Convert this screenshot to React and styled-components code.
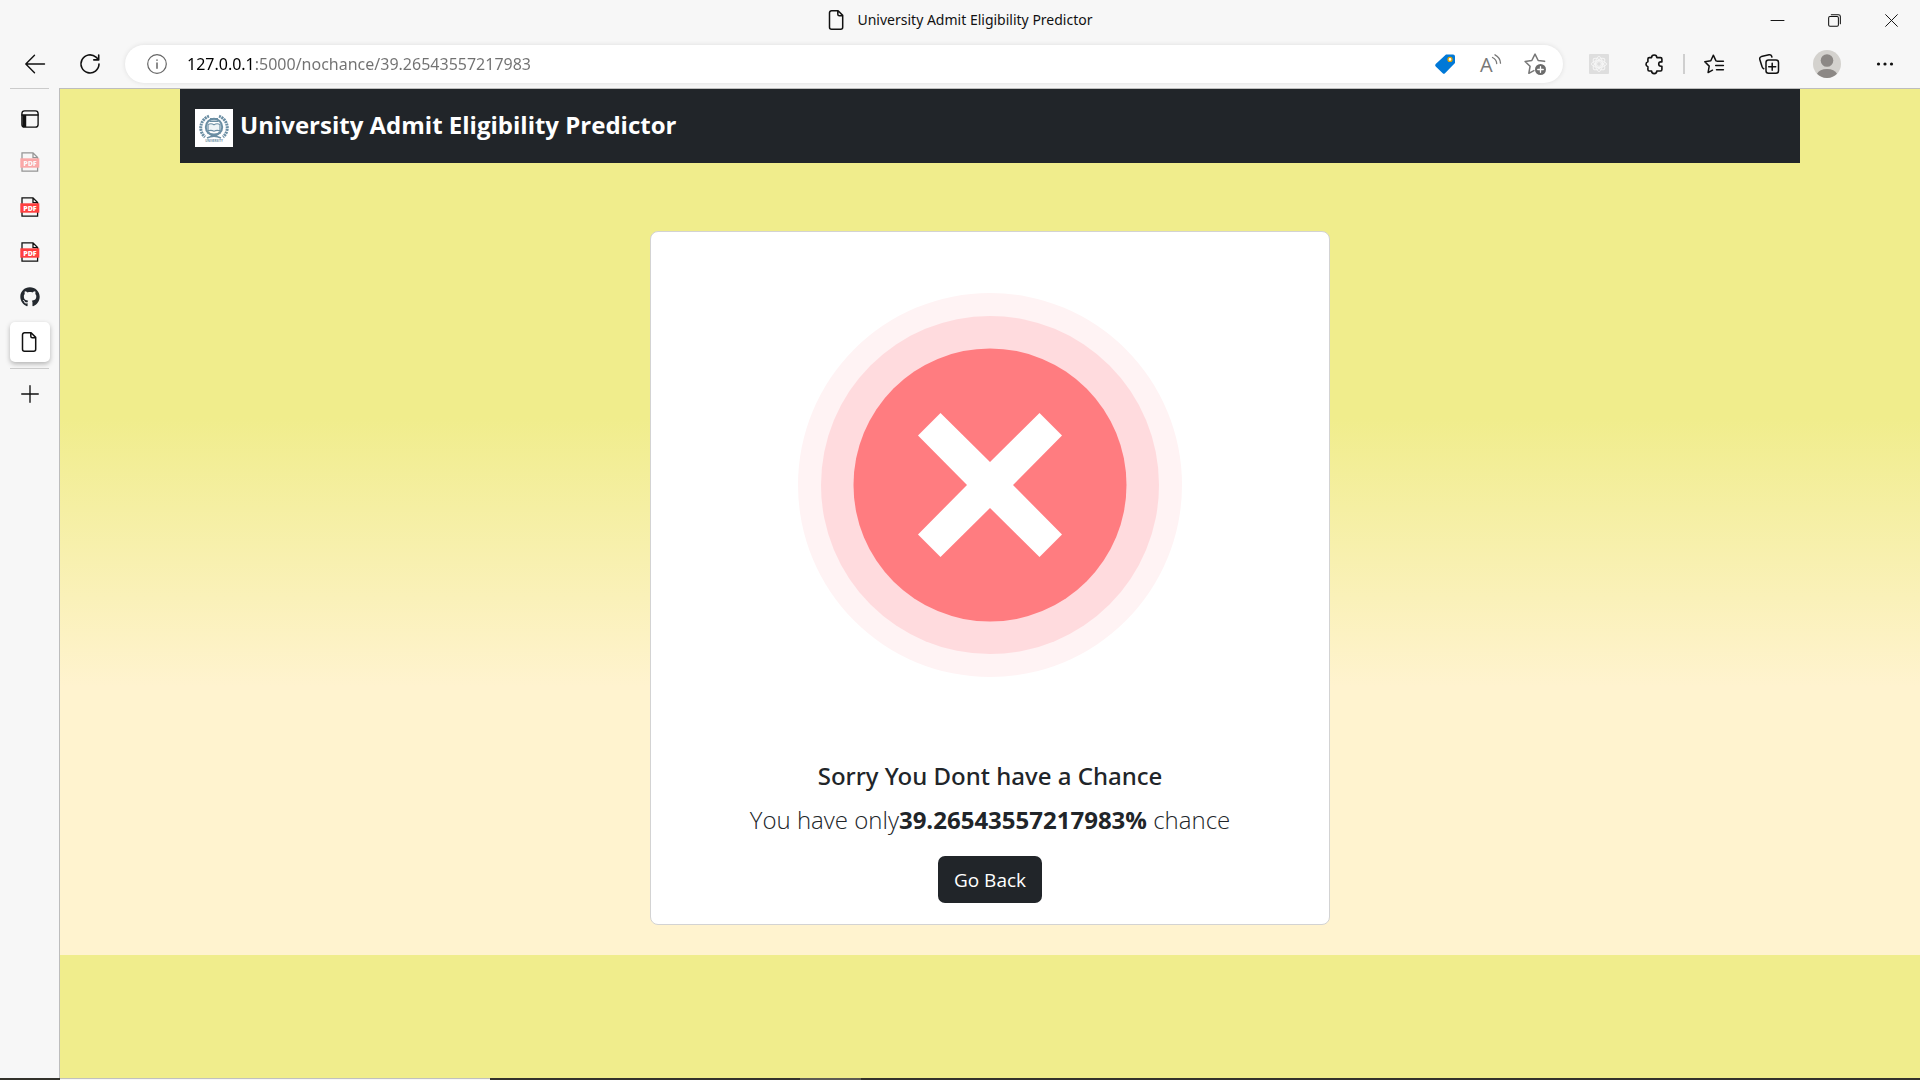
import React from "react";
import styled, { createGlobalStyle } from "styled-components";
import { FaGithub } from "react-icons/fa";

const GlobalStyle = createGlobalStyle`
  *, *::before, *::after { box-sizing: border-box; }
  body {
    margin: 0;
    background: #f7f7f7;
    color: #212529;
    font-family: "Open Sans", "Noto Sans", sans-serif;
  }
`;

const Window = styled.div`
  display: flex;
  flex-direction: column;
  min-height: 100vh;
`;

const TitleBar = styled.header`
  display: grid;
  grid-template-columns: 1fr auto 1fr;
  align-items: center;
  height: 40px;
`;

const WindowTitle = styled.div`
  grid-column: 2;
  display: flex;
  align-items: center;
  gap: 10px;
  color: #111;
  font-family: "Noto Sans", sans-serif;
  font-size: 14px;
  line-height: 20px;
`;

const WindowControls = styled.div`
  display: flex;
  justify-content: flex-end;
`;

const IconButton = styled.button`
  display: flex;
  flex: none;
  align-items: center;
  justify-content: center;
  width: ${(p) => p.$width || 40}px;
  height: ${(p) => p.$height || 38}px;
  padding: 0;
  border: 0;
  border-radius: 4px;
  background: transparent;
  color: ${(p) => p.$color || "#111"};
`;

const Toolbar = styled.div`
  display: flex;
  align-items: center;
  height: 48px;
  padding: 0 15px;
`;

const NavButtons = styled.div`
  display: flex;
  gap: 15px;
  margin-right: 15px;
`;

const AddressBar = styled.form`
  display: flex;
  flex: 1;
  align-items: center;
  height: 38px;
  margin-bottom: 1px;
  padding: 0 8px 0 12px;
  border-radius: 19px;
  background: #fff;
  box-shadow: 0 0 5px rgba(0, 0, 0, 0.1);
`;

const UrlInput = styled.input`
  flex: 1;
  min-width: 0;
  margin-left: 10px;
  padding: 0;
  border: 0;
  outline: 0;
  background: linear-gradient(to right, #000 67px, #717171 67px);
  background-clip: text;
  color: transparent;
  font: 400 16px/24px "Noto Sans", sans-serif;
`;

const AddressActions = styled.div`
  display: flex;
  gap: 5px;
`;

const ToolbarActions = styled.div`
  display: flex;
  align-items: center;
  gap: 15px;
  margin-left: 16px;
`;

const ToolbarDivider = styled.span`
  width: 2px;
  height: 20px;
  margin: 0 -6px;
  background: #cfcfcf;
`;

const Body = styled.div`
  display: flex;
  flex: 1;
`;

const Sidebar = styled.nav`
  display: flex;
  flex: none;
  flex-direction: column;
  align-items: center;
  width: 59px;
`;

const SidebarRule = styled.hr`
  width: 39px;
  height: 1px;
  margin: 0;
  border: 0;
  background: #cbcbcb;
`;

const TabList = styled.div`
  display: flex;
  flex-direction: column;
  gap: 5px;
  padding: 11px 0 6px;
`;

const TabButton = styled(IconButton)`
  border-radius: 5px;
  background: ${(p) => (p.$active ? "#fff" : "transparent")};
  box-shadow: ${(p) => (p.$active ? "0 2px 5px rgba(0, 0, 0, 0.28)" : "none")};
  opacity: ${(p) => (p.$faded ? 0.42 : 1)};
`;

const Page = styled.main`
  flex: 1;
  min-width: 0;
  border: 1px solid #bdbdbd;
  border-width: 1px 0 0 1px;
  background: #f0ed8c;
`;

const Backdrop = styled.div`
  padding: 0 120px 30px;
  background: linear-gradient(#f0ed8c 38%, #fff3cf 69%);
`;

const Navbar = styled.div`
  padding: 14px 15px 16px;
  background: #212529;
`;

const Brand = styled.a`
  display: inline-flex;
  align-items: flex-end;
  gap: 7px;
  color: #fff;
  font-size: 24px;
  font-weight: 700;
  line-height: 44px;
  text-decoration: none;
  vertical-align: top;
`;

const Card = styled.section`
  display: flex;
  flex-direction: column;
  align-items: center;
  max-width: 680px;
  margin: 68px auto 0;
  padding: 61px 20px 21px;
  border: 1px solid #d3d3d3;
  border-radius: 8px;
  background: #fff;
  text-align: center;
`;

const CardTitle = styled.h1`
  margin: 84px 0 10px;
  font-family: "Noto Sans", sans-serif;
  font-size: 24px;
  font-weight: 500;
  line-height: 30px;
`;

const CardText = styled.p`
  margin: 0 0 17px;
  font-size: 24px;
  font-weight: 300;
  line-height: 38px;

  b { font-weight: 700; }
`;

const BackButton = styled.button`
  height: 47px;
  padding: 0 16px;
  border: 0;
  border-radius: 7px;
  background: #212529;
  color: #fff;
  font: 400 19px/30px "Open Sans", "Noto Sans", sans-serif;
`;

const Taskbar = styled.footer`
  display: flex;
  height: 2px;
  background: #33322c;
`;

const TaskSegment = styled.span`
  width: ${(p) => p.$width}px;
  margin-left: ${(p) => p.$before}px;
  border-top: 1px solid ${(p) => p.$edge};
  background: ${(p) => p.$fill};
`;

const Svg = ({ size = 20, sw = 1.4, children, ...rest }) => (
  <svg width={size} height={size} viewBox="0 0 20 20" fill="none" stroke="currentColor" strokeWidth={sw}
    strokeLinecap="round" strokeLinejoin="round" overflow="visible" aria-hidden="true" {...rest}>{children}</svg>
);

const PageIcon = () => (
  <Svg sw={1.5}><path d="M4.5.8h6.6l4.6 4.6v11.8a2 2 0 0 1-2 2H4.5a2 2 0 0 1-2-2V2.8a2 2 0 0 1 2-2zM10.8 1v3.2a1.5 1.5 0 0 0 1.5 1.5h3.2" /></Svg>
);

const PdfIcon = () => (
  <Svg size={20} sw={1.3} strokeLinecap="butt" strokeLinejoin="miter">
    <path d="M2 7V.9h11l4.6 4.6V7M2 15v4.2h15.6V15M13 1v4.7h4.6" />
    <rect x=".3" y="6.3" width="19" height="9.4" fill="#ff4040" stroke="none" />
    <text x="9.9" y="13.6" textAnchor="middle" fill="#fff" stroke="none" fontSize="7" fontWeight="800" fontFamily="Open Sans">PDF</text>
  </Svg>
);

const Seal = () => (
  <svg width="38" height="38" viewBox="0 0 38 38" fill="none" stroke="#6b8ea3" aria-hidden="true">
    <rect width="38" height="38" fill="#fff" stroke="none" />
    <path d="M14 7.2A12.2 12.2 0 0 0 10 28M24 7.2A12.2 12.2 0 0 1 28 28" strokeWidth="3" strokeDasharray="2 .7" />
    <circle cx="19" cy="18" r="8.2" strokeWidth="2" />
    <path d="M15 9.8h8M14.5 12.3h9" strokeWidth="1.5" />
    <path d="M13 15.5q3-1.6 6 .2 3-1.8 6-.2V22q-3-1.2-6 .2-3-1.4-6-.2z" fill="#eef4f7" strokeWidth="1.2" />
    <path d="M12.5 23.5q6.5 4 13 0" strokeWidth="2" />
    <path d="M12 29q7-3.5 14 0" strokeWidth="1.5" />
    <text x="19" y="32.8" textAnchor="middle" fill="#6b8ea3" stroke="none" fontSize="3" fontWeight="700" fontFamily="Open Sans">UNIVERSITY</text>
  </svg>
);

const Rejected = () => (
  <svg width="384" height="384" viewBox="-192 -192 384 384" role="img" aria-label="Not eligible">
    <circle r="192" fill="#fff3f4" />
    <circle r="169" fill="#ffdbde" />
    <circle r="136.5" fill="#ff7c80" />
    <path d="M0-23 49.5-72 72-49.5 23 0 72 49.5 49.5 72 0 23-49.5 72-72 49.5-23 0-72-49.5-49.5-72z" fill="#fff" />
  </svg>
);

const STAR = "M18.7 7.6 12.9 6.8 10 1 7.1 6.8 1 7.7l4.5 4.4-1.1 6.4L9 16";

export default function App() {
  return (
    <>
      <GlobalStyle />
      <Window>
        <TitleBar>
          <WindowTitle><PageIcon />University Admit Eligibility Predictor</WindowTitle>
          <WindowControls>
            <IconButton $width={57} aria-label="Minimize"><Svg size={13} sw={1.5}><path d="M0 10h20" /></Svg></IconButton>
            <IconButton $width={57} aria-label="Restore">
              <Svg size={13} sw={1.6}><rect x="1" y="4" width="15" height="15" rx="2" /><path d="M5 1h11a3 3 0 0 1 3 3v11" /></Svg>
            </IconButton>
            <IconButton $width={57} aria-label="Close"><Svg size={13} sw={1.5}><path d="m1 1 18 18M19 1 1 19" /></Svg></IconButton>
          </WindowControls>
        </TitleBar>
        <Toolbar>
          <NavButtons>
            <IconButton aria-label="Back"><Svg><path d="M19.5 10H1M9.5 1.2.8 10l8.7 8.8" /></Svg></IconButton>
            <IconButton aria-label="Refresh"><Svg sw={1.6}><path d="M19 10a9 9 0 1 1-3-6.8L18.5 5.5M18.7 1v4.9h-4.9" /></Svg></IconButton>
          </NavButtons>
          <AddressBar onSubmit={(e) => e.preventDefault()}>
            <IconButton type="button" aria-label="View site information" $color="#666">
              <Svg sw={1.2}><circle cx="10" cy="10" r="9.3" /><path d="M10 9v5.2M10 6v.2" strokeWidth="1.5" /></Svg>
            </IconButton>
            <UrlInput aria-label="Address" defaultValue="127.0.0.1:5000/nochance/39.26543557217983" />
            <AddressActions>
              <IconButton type="button" aria-label="Shopping">
                <Svg stroke="none"><path d="M11 .5h7a2 2 0 0 1 2 2V9L10 19.2a1.6 1.6 0 0 1-2.3 0L.7 12.4a1.6 1.6 0 0 1 0-2.3z" fill="#0078d7" /><circle cx="15" cy="5.4" r="2" fill="#fff" stroke="#e3a400" strokeWidth="1.3" /></Svg>
              </IconButton>
              <IconButton type="button" aria-label="Read aloud" $color="#777">
                <Svg sw={1.3}><text x="0" y="17.5" fill="currentColor" stroke="none" fontSize="20" fontWeight="400" fontFamily="Open Sans">A</text><path d="M12.5 3.5q4 2 4.2 6M15 .8q5.3 2.7 5.5 8.4" /></Svg>
              </IconButton>
              <IconButton type="button" aria-label="Add to favorites" $color="#777">
                <Svg size={22}><path d={STAR} /><circle cx="15" cy="15" r="5" fill="#6c6c6c" stroke="none" /><path d="M15 12.5v5M12.5 15h5" stroke="#fff" strokeWidth="1.2" /></Svg>
              </IconButton>
            </AddressActions>
          </AddressBar>
          <ToolbarActions>
            <IconButton aria-label="Extension">
              <Svg stroke="#f5f5f5" sw={1}><rect width="20" height="20" rx="1" fill="#dedede" stroke="none" /><circle cx="10" cy="10" r="2.4" /><ellipse cx="10" cy="10" rx="3.5" ry="7.5" /><ellipse cx="10" cy="10" rx="7.5" ry="3.5" /><ellipse cx="10" cy="10" rx="3.5" ry="7.5" transform="rotate(45 10 10)" /><ellipse cx="10" cy="10" rx="3.5" ry="7.5" transform="rotate(-45 10 10)" /></Svg>
            </IconButton>
            <IconButton aria-label="Extensions">
              <Svg sw={1.6}><path d="M5.3 3.6h2.3a2.6 2.6 0 0 1 5.2 0h3.7A1.4 1.4 0 0 1 17.9 5v2.9h-1a2.2 2.2 0 1 0 0 4.4h1v3.3a1.4 1.4 0 0 1-1.4 1.4h-3.7a2.6 2.6 0 0 1-5.2 0H5.3a1.4 1.4 0 0 1-1.4-1.4v-2.9a2.6 2.6 0 0 1 0-5V5a1.4 1.4 0 0 1 1.4-1.4z" /></Svg>
            </IconButton>
            <ToolbarDivider />
            <IconButton aria-label="Favorites">
              <Svg sw={1.5}><path d="M12 6.8 9.3 1.2 6.8 6.8.8 7.7l4.4 4.4-1.1 6.5 4.4-2.4M13 7.3h6.4M11.7 11.5h7.7M12.5 15.7h6.9" /></Svg>
            </IconButton>
            <IconButton aria-label="Collections">
              <Svg sw={1.5}><rect x="7" y="6" width="12.5" height="13.2" rx="2.5" /><path d="M13.2 9.2v7M9.7 12.7h7M4.8 14.8A3 3 0 0 1 3 12.5L.8 5.5A2.3 2.3 0 0 1 2.4 2.6L10 .8a2.3 2.3 0 0 1 2.7 1.5l.2.8" /></Svg>
            </IconButton>
            <IconButton $width={46} aria-label="Profile">
              <svg width="28" height="28" viewBox="0 0 28 28" aria-hidden="true"><circle cx="14" cy="14" r="14" fill="#d4d2ce" /><circle cx="14" cy="10.5" r="6.3" fill="#8c8885" /><path d="M4 23.8a10.6 7 0 0 1 20 0 14 14 0 0 1-20 0z" fill="#8c8885" /></svg>
            </IconButton>
            <IconButton aria-label="Settings and more">
              <Svg fill="currentColor" stroke="none"><circle cx="3.5" cy="10" r="1.6" /><circle cx="10" cy="10" r="1.6" /><circle cx="16.5" cy="10" r="1.6" /></Svg>
            </IconButton>
          </ToolbarActions>
        </Toolbar>
        <Body>
          <Sidebar aria-label="Vertical tabs">
            <SidebarRule />
            <TabList>
              <TabButton $height={37} aria-label="Tab actions">
                <Svg size={18} sw={1.5}><rect x="1" y="1" width="18" height="18" rx="3" /><path d="M1 5.5h18" /><path d="M1.5 5.5h4.3V19H3a2 2 0 0 1-1.5-1.5z" fill="currentColor" stroke="none" /></Svg>
              </TabButton>
              <TabButton $height={40} $faded aria-label="PDF, sleeping"><PdfIcon /></TabButton>
              <TabButton $height={40} aria-label="PDF"><PdfIcon /></TabButton>
              <TabButton $height={40} aria-label="PDF"><PdfIcon /></TabButton>
              <TabButton $height={40} $color="#24292f" aria-label="GitHub"><FaGithub size={20} /></TabButton>
              <TabButton $height={40} $active aria-label="University Admit Eligibility Predictor"><PageIcon /></TabButton>
            </TabList>
            <SidebarRule />
            <TabButton $height={50} aria-label="New tab"><Svg size={18} sw={1.5}><path d="M10 .8v18.4M.8 10h18.4" /></Svg></TabButton>
          </Sidebar>
          <Page>
            <Backdrop>
              <Navbar><Brand href="#"><Seal />University Admit Eligibility Predictor</Brand></Navbar>
              <Card>
                <Rejected />
                <CardTitle>Sorry You Dont have a Chance</CardTitle>
                <CardText>You have only<b>39.26543557217983%</b> chance</CardText>
                <BackButton type="button">Go Back</BackButton>
              </Card>
            </Backdrop>
          </Page>
        </Body>
        <Taskbar>
          <TaskSegment $before={60} $width={430} $edge="#c0c0c0" $fill="#f7f7f7" />
          <TaskSegment $before={310} $width={61} $edge="#5d5b54" $fill="#5d5b54" />
        </Taskbar>
      </Window>
    </>
  );
}
